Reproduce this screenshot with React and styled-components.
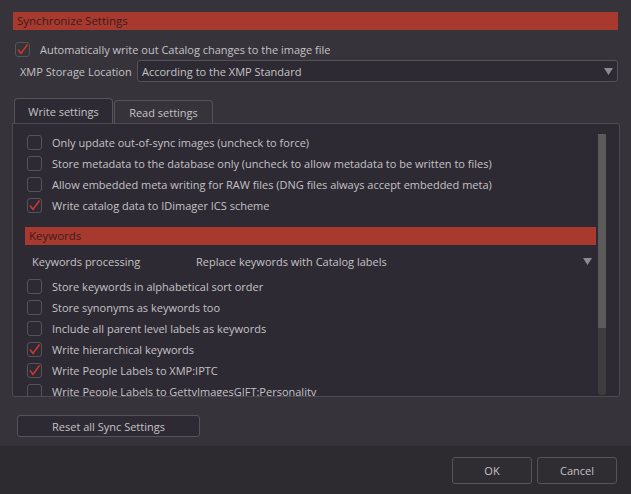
import React from "react";
import styled, { createGlobalStyle } from "styled-components";

const GlobalStyle = createGlobalStyle`
  body {
    margin: 0;
    background: #36333a;
    font-family: "Open Sans", "Noto Sans", sans-serif;
    font-size: 11px;
    color: #c4c2c6;
  }
`;

const writeOptions = [
  { label: "Only update out-of-sync images (uncheck to force)", checked: false },
  { label: "Store metadata to the database only (uncheck to allow metadata to be written to files)", checked: false },
  { label: "Allow embedded meta writing for RAW files (DNG files always accept embedded meta)", checked: false },
  { label: "Write catalog data to IDimager ICS scheme", checked: true },
];

const keywordOptions = [
  { label: "Store keywords in alphabetical sort order", checked: false },
  { label: "Store synonyms as keywords too", checked: false },
  { label: "Include all parent level labels as keywords", checked: false },
  { label: "Write hierarchical keywords", checked: true },
  { label: "Write People Labels to XMP:IPTC", checked: true },
  { label: "Write People Labels to GettyImagesGIFT:Personality", checked: false },
];

function CheckBox({ checked }) {
  return (
    <Box>
      {checked && (
        <svg width="13" height="13" viewBox="0 0 13 13">
          <path d="M2 6.5 L5 10.5 L11.5 1.5" fill="none" stroke="#c8382c" strokeWidth="1.6" />
        </svg>
      )}
    </Box>
  );
}

function Arrow() {
  return (
    <svg width="9" height="7" viewBox="0 0 9 7">
      <path d="M0 0 H9 L4.5 7 Z" fill="#8c8a8f" />
    </svg>
  );
}

function SyncSettings() {
  return (
    <Page>
      <GlobalStyle />
      <Main>
        <SectionBar>Synchronize Settings</SectionBar>
        <TopCheck>
          <CheckBox checked />
          <span>Automatically write out Catalog changes to the image file</span>
        </TopCheck>
        <StorageRow>
          <StorageLabel>XMP Storage Location</StorageLabel>
          <Select>
            <span>According to the XMP Standard</span>
            <Arrow />
          </Select>
        </StorageRow>
        <Tabs>
          <Tab active>Write settings</Tab>
          <Tab>Read settings</Tab>
        </Tabs>
        <Panel>
          <PanelContent>
            {writeOptions.map(item => (
              <OptionRow key={item.label}>
                <CheckBox checked={item.checked} />
                <span>{item.label}</span>
              </OptionRow>
            ))}
            <KeywordsBar>Keywords</KeywordsBar>
            <ProcessingRow>
              <ProcessingLabel>Keywords processing</ProcessingLabel>
              <ProcessingValue>Replace keywords with Catalog labels</ProcessingValue>
              <Arrow />
            </ProcessingRow>
            {keywordOptions.map(item => (
              <OptionRow key={item.label}>
                <CheckBox checked={item.checked} />
                <span>{item.label}</span>
              </OptionRow>
            ))}
          </PanelContent>
          <ScrollTrack>
            <ScrollThumb />
          </ScrollTrack>
        </Panel>
        <ResetButton>Reset all Sync Settings</ResetButton>
      </Main>
      <Footer>
        <DialogButton>OK</DialogButton>
        <DialogButton>Cancel</DialogButton>
      </Footer>
    </Page>
  );
}

export default function App() {
  return <SyncSettings />;
}

const Page = styled.div`
  display: flex;
  flex-direction: column;
  width: 631px;
  height: 494px;
  overflow: hidden;
`;

const Main = styled.div`
  flex: 1;
  display: flex;
  flex-direction: column;
  padding: 12px 11px 0 12px;
`;

const SectionBar = styled.div`
  height: 18px;
  margin: 0 2px 0 1px;
  padding-left: 4px;
  background: #a8392e;
  color: #3c1d1b;
  font-size: 11.5px;
  line-height: 17px;
`;

const Box = styled.div`
  width: 15px;
  height: 15px;
  box-sizing: border-box;
  border: 1px solid #57525c;
  border-radius: 3px;
  display: flex;
  align-items: center;
  justify-content: center;
  flex-shrink: 0;
`;

const TopCheck = styled.div`
  display: flex;
  align-items: center;
  gap: 10px;
  margin: 11px 0 0 3px;
  height: 16px;
`;

const StorageRow = styled.div`
  display: flex;
  align-items: center;
  margin-top: 3px;
  height: 22px;
`;

const StorageLabel = styled.span`
  width: 117px;
  padding-left: 8px;
`;

const Select = styled.div`
  flex: 1;
  height: 22px;
  box-sizing: border-box;
  display: flex;
  align-items: center;
  justify-content: space-between;
  padding: 0 4px 0 4px;
  margin-right: 2px;
  background: #2e2a33;
  border: 1px solid #55515a;
  border-radius: 3px;
`;

const Tabs = styled.div`
  display: flex;
  align-items: flex-end;
  margin: 16px 0 0 2px;
  height: 25px;
`;

const Tab = styled.div`
  width: 99px;
  height: ${p => (p.active ? 25 : 23)}px;
  box-sizing: border-box;
  display: flex;
  align-items: center;
  justify-content: center;
  background: ${p => (p.active ? "#2e2a33" : "#36333a")};
  border: 1px solid #57535b;
  border-bottom: none;
  border-radius: 4px 4px 0 0;
  margin-right: 1px;
`;

const Panel = styled.div`
  height: 274px;
  box-sizing: border-box;
  display: flex;
  background: #2e2a33;
  border: 1px solid #4e4a53;
  border-radius: 0 3px 3px 3px;
`;

const PanelContent = styled.div`
  flex: 1;
  overflow: hidden;
  padding: 8px 2px 0 12px;
`;

const OptionRow = styled.div`
  display: flex;
  align-items: center;
  gap: 10px;
  height: 21px;
  padding-left: 2px;
  white-space: nowrap;
`;

const KeywordsBar = styled.div`
  height: 18px;
  margin-top: 11px;
  padding-left: 4px;
  background: #a8392e;
  color: #3c1d1b;
  font-size: 11.5px;
  line-height: 17px;
`;

const ProcessingRow = styled.div`
  display: flex;
  align-items: center;
  height: 20px;
  margin: 6px 0 5px;
  padding: 0 4px 0 7px;
`;

const ProcessingLabel = styled.span`
  width: 164px;
`;

const ProcessingValue = styled.span`
  flex: 1;
`;

const ScrollTrack = styled.div`
  width: 8px;
  margin: 10px 13px 1px 0;
  display: flex;
  flex-direction: column;
  background: #3d3c3f;
  border-radius: 0 0 3px 3px;
`;

const ScrollThumb = styled.div`
  height: 194px;
  background: #5b5b5c;
`;

const ResetButton = styled.div`
  width: 183px;
  height: 22px;
  box-sizing: border-box;
  margin: 18px 0 0 5px;
  display: flex;
  align-items: center;
  justify-content: center;
  background: #2e2a33;
  border: 1px solid #57535b;
  border-radius: 3px;
`;

const Footer = styled.div`
  height: 48px;
  display: flex;
  align-items: center;
  justify-content: flex-end;
  gap: 5px;
  padding: 0 14px 0 0;
  background: #2d2a30;
`;

const DialogButton = styled.div`
  width: 80px;
  height: 27px;
  box-sizing: border-box;
  display: flex;
  align-items: center;
  justify-content: center;
  border: 1px solid #57535b;
  border-radius: 3px;
  background: #2f2c32;
`;
